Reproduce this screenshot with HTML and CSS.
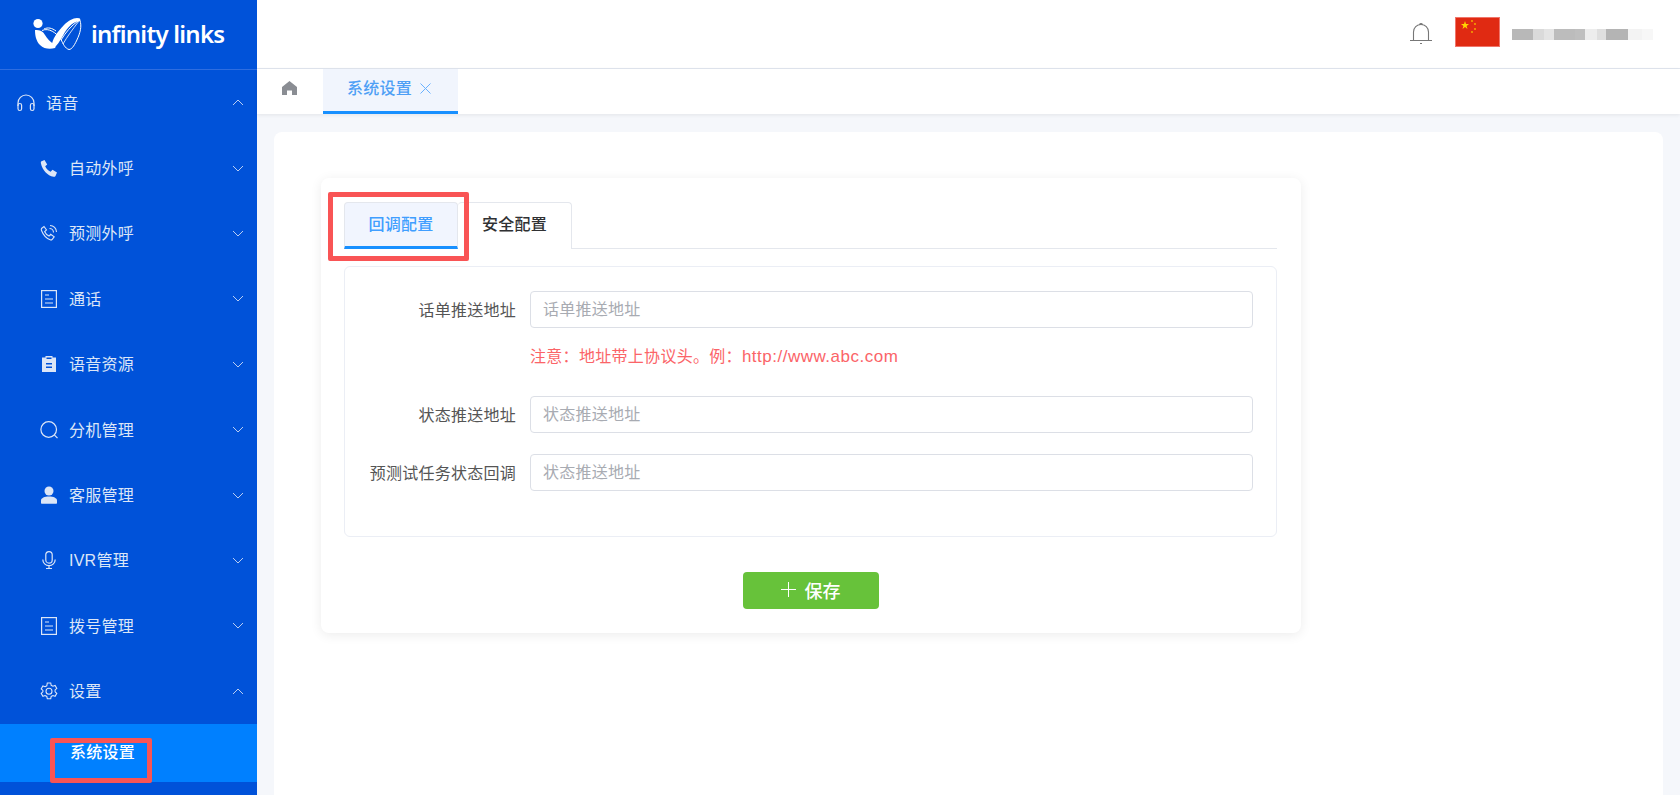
FILE: index.html
```html
<!DOCTYPE html>
<html lang="zh-CN">
<head>
<meta charset="utf-8">
<title>系统设置</title>
<link rel="stylesheet" href="styles.css">
</head>
<body>
<div class="app">
  <aside class="sidebar">
    <div class="logo">
      <svg class="logo-mark" viewBox="0 0 52 36" width="52" height="36">
        <circle cx="5" cy="7.500" r="4.600" fill="#fff"/>
        <path d="M2 14c5 0 8 1 10 5 2 3 5 7 9 9 2 1 2 3 1 4-5 1.500-11 1-15-3C3 25 2 19 2 14z" fill="#fff"/>
        <path d="M19 29c0-5 5-13 12-20 4-4 9-7 13-7 3 0 4 1 3 3-6 0-11 5-15 11-3 5-6 11-9 14-2 1-4 1-4-1z" fill="#fff"/>
        <path d="M9 14.500c7-3 14 2 19 9 2 4 4 9 8 10 3 0 6-5 9-12 3-7 4-14 1-19" fill="none" stroke="#fff" stroke-width="1"/>
        <path d="M28 24c5-8 10-14 17-19M11 13c4-2 8-1 12 2" fill="none" stroke="#fff" stroke-width="1"/>
        <path d="M30 28c4-7 9-14 16-23" fill="none" stroke="#fff" stroke-width=".8"/>
      </svg>
      <span class="logo-text">infinity links</span>
    </div>
    <nav class="menu">
      <div class="row">
        <svg class="ico" viewBox="0 0 20 20" width="20" height="20" fill="none" stroke="currentColor" stroke-width="1.200"><path d="M2 13V10a8 8 0 0 1 16 0v3"/><rect x="2" y="10.500" width="3.600" height="7" rx="1.800"/><rect x="14.400" y="10.500" width="3.600" height="7" rx="1.800"/></svg>
        <span class="label">语音</span>
        <svg class="chev" viewBox="0 0 12 7" width="12" height="7"><path d="M1 6l5-5 5 5" fill="none" stroke="currentColor"/></svg>
      </div>
      <div class="row sub">
        <svg class="ico" viewBox="0 0 18 18" width="18" height="18" fill="currentColor"><path d="M1 2.500 4.500 1l2.700 4.500-2 1.700c1 2.400 3 4.400 5.400 5.500l1.900-2 4.500 2.800-1.500 3.500c-.4.700-1.200 1-2 .8C7.500 16.500 2.300 11 1 4.700c-.2-.9-.3-1.700 0-2.200z"/></svg>
        <span class="label">自动外呼</span>
        <svg class="chev" viewBox="0 0 12 7" width="12" height="7"><path d="M1 1l5 5 5-5" fill="none" stroke="currentColor"/></svg>
      </div>
      <div class="row sub">
        <svg class="ico" viewBox="0 0 18 18" width="18" height="18" fill="none" stroke="currentColor" stroke-width="1.100"><path d="M1.500 4.500 4 2.500l2.500 3.500-1.800 1.700c.9 2 2.300 3.400 4.300 4.400l1.700-1.800 3.500 2.500-2 2.500c-.5.600-1.200.8-2 .5C6.500 14.500 3.500 11.500 1.500 6.500c-.3-.8-.3-1.500 0-2z"/><path d="M9.500 4.500a4 4 0 0 1 4 4M10 1.500a6.500 6.500 0 0 1 6.500 6.500"/></svg>
        <span class="label">预测外呼</span>
        <svg class="chev" viewBox="0 0 12 7" width="12" height="7"><path d="M1 1l5 5 5-5" fill="none" stroke="currentColor"/></svg>
      </div>
      <div class="row sub">
        <svg class="ico" viewBox="0 0 18 18" width="18" height="18" fill="none" stroke="currentColor" stroke-width="1.200"><rect x="1.600" y=".6" width="14.800" height="16.800"/><path d="M5 5h4M5 9h8M5 13h8"/></svg>
        <span class="label">通话</span>
        <svg class="chev" viewBox="0 0 12 7" width="12" height="7"><path d="M1 1l5 5 5-5" fill="none" stroke="currentColor"/></svg>
      </div>
      <div class="row sub">
        <svg class="ico" viewBox="0 0 18 18" width="18" height="18" fill="currentColor"><path d="M2 2.500h3.500V1h7v1.500H16V17H2zM6 8v1.400h6V8zm0 3.500V13h6v-1.500zM6.500 2.500V4h5V2.500z" fill-rule="evenodd"/></svg>
        <span class="label">语音资源</span>
        <svg class="chev" viewBox="0 0 12 7" width="12" height="7"><path d="M1 1l5 5 5-5" fill="none" stroke="currentColor"/></svg>
      </div>
      <div class="row sub">
        <svg class="ico" viewBox="0 0 18 18" width="18" height="18" fill="none" stroke="currentColor" stroke-width="1.200"><circle cx="8.700" cy="8.500" r="7.800"/><path d="M14.500 14.200l3 3"/></svg>
        <span class="label">分机管理</span>
        <svg class="chev" viewBox="0 0 12 7" width="12" height="7"><path d="M1 1l5 5 5-5" fill="none" stroke="currentColor"/></svg>
      </div>
      <div class="row sub">
        <svg class="ico" viewBox="0 0 18 18" width="18" height="18" fill="currentColor"><circle cx="9" cy="5" r="4.500"/><path d="M1 14.500c0-2.500 3.500-4 8-4s8 1.500 8 4V17c0 .4-.3.700-.7.700H1.700c-.4 0-.7-.3-.7-.7z"/></svg>
        <span class="label">客服管理</span>
        <svg class="chev" viewBox="0 0 12 7" width="12" height="7"><path d="M1 1l5 5 5-5" fill="none" stroke="currentColor"/></svg>
      </div>
      <div class="row sub">
        <svg class="ico" viewBox="0 0 18 18" width="18" height="18" fill="none" stroke="currentColor" stroke-width="1.200"><rect x="5.800" y=".6" width="6.400" height="11.500" rx="3.200"/><path d="M2.800 8.500a6.200 6.200 0 0 0 12.400 0M9 14.800v2.700M6 17.500h6"/></svg>
        <span class="label">IVR管理</span>
        <svg class="chev" viewBox="0 0 12 7" width="12" height="7"><path d="M1 1l5 5 5-5" fill="none" stroke="currentColor"/></svg>
      </div>
      <div class="row sub">
        <svg class="ico" viewBox="0 0 18 18" width="18" height="18" fill="none" stroke="currentColor" stroke-width="1.200"><rect x="1.600" y=".6" width="14.800" height="16.800"/><path d="M5 5h4M5 9h8M5 13h8"/></svg>
        <span class="label">拨号管理</span>
        <svg class="chev" viewBox="0 0 12 7" width="12" height="7"><path d="M1 1l5 5 5-5" fill="none" stroke="currentColor"/></svg>
      </div>
      <div class="row sub">
        <svg class="ico" viewBox="0 0 18 18" width="18" height="18" fill="none" stroke="currentColor" stroke-width="1.100"><path d="M7.300 1h3.400l.5 2.300 1.700.9 2.200-.8 1.700 3-1.700 1.500v1.900l1.700 1.500-1.700 3-2.200-.8-1.700.9-.5 2.300H7.300l-.5-2.300-1.700-.9-2.200.8-1.700-3 1.700-1.500V8.400L1.200 6.900l1.700-3 2.200.8 1.700-.9z"/><circle cx="9" cy="9.300" r="3"/></svg>
        <span class="label">设置</span>
        <svg class="chev" viewBox="0 0 12 7" width="12" height="7"><path d="M1 6l5-5 5 5" fill="none" stroke="currentColor"/></svg>
      </div>
      <div class="row-active"><span>系统设置</span><i class="mark mark-side"></i></div>
    </nav>
  </aside>
  <div class="main">
    <header class="topbar">
      <svg class="bell" viewBox="0 0 22 24" width="22" height="24" fill="none" stroke="#777" stroke-width="1.100"><path d="M0 19.500h22M3.500 19.500V11a7.500 7.500 0 0 1 15 0v8.500M9.500 3.600a1.600 1.600 0 0 1 3 0M10 22.500h2"/></svg>
      <svg class="flag" viewBox="0 0 45 30" width="45" height="30">
        <rect width="45" height="30" fill="#e02a12"/>
        <polygon points="10,4 11,7 14,7 11.600,8.900 12.500,12 10,10.100 7.500,12 8.400,8.900 6,7 9,7" fill="#ffd500"/>
        <g fill="#f7b500"><circle cx="17" cy="4" r=".9"/><circle cx="20" cy="7" r=".9"/><circle cx="20" cy="12" r=".9"/><circle cx="17" cy="15" r=".9"/></g>
      </svg>
      <div class="user-blur"></div>
    </header>
    <div class="tabsbar">
      <svg class="home" viewBox="0 0 15 14" width="15" height="14"><path d="M7.500 0 15 6v8h-5V9.500H5V14H0V6z" fill="#8a8d93"/></svg>
      <div class="page-tab">系统设置
        <svg class="close" viewBox="0 0 11 11" width="11" height="11"><path d="M.5.500l10 10M10.500.500l-10 10" stroke="#69b1ff" fill="none"/></svg>
      </div>
    </div>
    <main class="content">
      <section class="panel">
        <div class="card">
          <div class="tabs">
            <div class="tab tab-active">回调配置</div>
            <div class="tab tab-plain">安全配置</div>
            <i class="mark mark-tab"></i>
          </div>
          <div class="form">
            <div class="field">
              <label class="field-label">话单推送地址</label>
              <div class="input">话单推送地址</div>
            </div>
            <p class="note">注意：地址带上协议头。例：<span class="note-url">http://www.abc.com</span></p>
            <div class="field field-2">
              <label class="field-label">状态推送地址</label>
              <div class="input">状态推送地址</div>
            </div>
            <div class="field field-3">
              <label class="field-label">预测试任务状态回调</label>
              <div class="input">状态推送地址</div>
            </div>
          </div>
          <div class="actions">
            <button class="save"><svg viewBox="0 0 15 15" width="15" height="15"><path d="M7.500 0v15M0 7.500h15" stroke="#fff" fill="none"/></svg><span>保存</span></button>
          </div>
        </div>
      </section>
    </main>
  </div>
</div>
</body>
</html>
```
FILE: styles.css
```css
* { box-sizing: border-box; }
html, body { margin: 0; height: 100%; overflow: hidden; }
body { font-family: "Liberation Sans", "Noto Sans CJK SC", sans-serif; font-size: 16px; letter-spacing: .25px; color: #606266; background: #f5f7fb; }
.app { display: flex; height: 795px; }

.sidebar { width: 257px; flex: none; background: #0052d9; color: #dce6f7; overflow: hidden; }
.logo { height: 70px; border-bottom: 1px solid #2e6de0; display: flex; align-items: center; padding-left: 33px; padding-bottom: 2px; }
.logo-mark { flex: none; }
.logo-text { margin-left: 6px; font-family: "Noto Sans", sans-serif; font-weight: 600; font-size: 24px; line-height: 1; color: #fff; letter-spacing: -.75px; }
.row { height: 65.4px; display: flex; align-items: center; padding: 0 13px 0 16px; }
.row.sub { padding-left: 40px; }
.ico { flex: none; width: 20px; }
.row.sub .ico { width: 18px; }
.label { margin-left: 10px; flex: 1; position: relative; top: -1px; }
.row.sub .label { margin-left: 11px; }
.chev { flex: none; color: #b9cdf2; }
.row-active { position: relative; height: 58px; background: #0080ff; color: #fff; padding-left: 70px; line-height: 58px; font-weight: 500; }
.mark { position: absolute; border: 5px solid #f95455; border-radius: 2px; }
.mark-side { left: 50px; top: 14px; width: 102px; height: 45px; }

.main { flex: 1; min-width: 0; display: flex; flex-direction: column; }
.topbar { height: 69px; background: #fff; border-bottom: 1px solid #e1e6ef; display: flex; align-items: center; padding: 0 27px 0 0; justify-content: flex-end; }
.bell { margin-bottom: 2px; }
.flag { margin-left: 23px; margin-bottom: 5px; outline: 1px solid #f0756a; outline-offset: -1px; }
.user-blur { margin-left: 12px; width: 141px; height: 11px; background: linear-gradient(90deg, #b8b8b8 0 15%, #dadada 15% 23%, #e4e4e4 23% 30%, #bcbcbc 30% 45%, #bfbfbf 45% 52%, #ededed 52% 60%, #dfdfdf 60% 67%, #b4b4b4 67% 82%, #f3f3f3 82% 92%, #f7f7f7 92% 100%); }
.tabsbar { height: 45px; background: #fff; display: flex; align-items: stretch; box-shadow: 0 1px 4px rgba(0,0,0,.08); position: relative; }
.home { margin: 12px 26px 0 25px; flex: none; }
.page-tab { width: 135px; background: #f1f5fd; border-bottom: 3px solid #1890ff; color: #4e9ff5; font-weight: 500; padding: 8px 0 0 24px; line-height: 24px; display: flex; gap: 8px; }
.close { margin-top: 6px; }

.content { flex: 1; min-height: 0; padding: 18px 17px 0 17px; }
.panel { height: 100%; background: #fff; border-radius: 8px 8px 0 0; padding: 46px 0 0 47px; }
.card { width: 980px; height: 455px; background: #fff; border-radius: 8px; box-shadow: 0 2px 12px rgba(0,0,0,.08); padding: 24px 24px 0 23px; }

.tabs { position: relative; height: 47px; display: flex; border-bottom: 1px solid #e4e7ed; }
.tab { height: 47px; line-height: 44px; text-align: center; font-weight: 500; border: 1px solid #e4e7ed; border-bottom: 0; border-radius: 4px 4px 0 0; }
.tab-active { width: 114px; background: #f1f5fe; color: #409eff; border-bottom: 3px solid #1890ff; }
.tab-plain { width: 114px; color: #303133; border-left: 0; background: #fff; }
.mark-tab { left: -16px; top: -10px; width: 141px; height: 69px; }

.form { height: 271px; margin-top: 17px; border: 1px solid #ebeef5; border-radius: 6px; padding: 24px 23px 0 0; }
.field { display: flex; align-items: center; height: 37px; }
.field-3 { margin-top: 21px; }
.field-label { width: 185px; flex: none; text-align: right; padding-right: 14px; color: #555; white-space: nowrap; position: relative; top: -1px; }
.input { flex: 1; height: 37px; line-height: 35px; border: 1px solid #dcdfe6; border-radius: 4px; padding: 0 12px; color: #a8abb2; background: #fff; }
.note { margin: 0 0 0 185px; height: 68px; padding-top: 17px; line-height: 24px; color: #fb6468; letter-spacing: .3px; }
.note-url { font-size: 17px; letter-spacing: .5px; }

.actions { display: flex; justify-content: center; margin-top: 35px; }
.save { width: 136px; height: 37px; border: 0; border-radius: 4px; background: #67c23a; color: #fff; font: 500 18px "Liberation Sans", "Noto Sans CJK SC", sans-serif; display: flex; align-items: center; justify-content: center; gap: 9px; padding: 0 0 2px; }
```
